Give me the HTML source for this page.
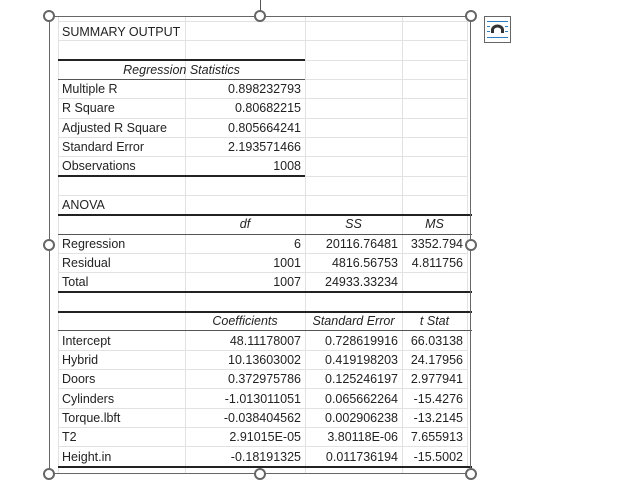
<!DOCTYPE html><html><head><style>
body{margin:0;width:624px;height:493px;background:#fff;position:relative;overflow:hidden;font-family:"Liberation Sans",sans-serif;font-size:12.5px;color:#222}
.h{position:absolute;left:58px;width:409px;height:1px;background:#e2e2e2}
.v{position:absolute;top:17px;height:457px;width:1px;background:#e2e2e2}
.tk{position:absolute;left:58px;width:414px;height:2px;background:#222}
.tn{position:absolute;left:58px;width:414px;height:1px;background:#555}
.t{position:absolute;line-height:19px;white-space:nowrap;margin-top:1px}
.l{left:62px}
.c{right:calc(624px - 301px)}
.d{right:calc(624px - 398px)}
.e{right:calc(624px - 463px)}
.cc{left:185px;width:120px;text-align:center}
.dc{left:305px;width:97px;text-align:center}
.ec{left:402px;width:65px;text-align:center}
i{font-style:italic}
.hd{position:absolute;border:2px solid #666;border-radius:50%;background:#fff;box-sizing:border-box;margin:-6px 0 0 -6px;width:12px;height:12px}
</style></head><body>
<div style="position:absolute;left:260px;top:0;width:1px;height:16px;background:#555"></div>
<div class="v" style="left:58px"></div><div class="v" style="left:185px"></div><div class="v" style="left:305px"></div><div class="v" style="left:402px"></div><div class="v" style="left:467px"></div>
<div class="h" style="top:21px"></div><div class="h" style="top:40px"></div><div class="h" style="top:60px"></div><div class="h" style="top:79px"></div><div class="h" style="top:98px"></div><div class="h" style="top:118px"></div><div class="h" style="top:137px"></div><div class="h" style="top:156px"></div><div class="h" style="top:176px"></div><div class="h" style="top:195px"></div><div class="h" style="top:214px"></div><div class="h" style="top:234px"></div><div class="h" style="top:253px"></div><div class="h" style="top:272px"></div><div class="h" style="top:292px"></div><div class="h" style="top:311px"></div><div class="h" style="top:330px"></div><div class="h" style="top:350px"></div><div class="h" style="top:369px"></div><div class="h" style="top:388px"></div><div class="h" style="top:408px"></div><div class="h" style="top:427px"></div><div class="h" style="top:446px"></div>
<div class="tk" style="top:59px;width:247px"></div><div class="tn" style="top:79px;width:247px"></div><div class="tk" style="top:175px;width:247px"></div>
<div class="tk" style="top:214px"></div><div class="tn" style="top:234px"></div><div class="tk" style="top:291px"></div>
<div class="tk" style="top:311px"></div><div class="tn" style="top:330px"></div><div class="tk" style="top:466px"></div>
<div style="position:absolute;left:49px;top:16px;width:422px;height:458px;border:1px solid #666;box-sizing:border-box"></div>
<div class="t l" style="top:22px">SUMMARY OUTPUT</div>
<div class="t" style="top:60px;left:58px;width:247px;text-align:center"><i>Regression Statistics</i></div>
<div class="t l" style="top:79px">Multiple R</div><div class="t c" style="top:79px">0.898232793</div>
<div class="t l" style="top:98px">R Square</div><div class="t c" style="top:98px">0.80682215</div>
<div class="t l" style="top:118px">Adjusted R Square</div><div class="t c" style="top:118px">0.805664241</div>
<div class="t l" style="top:137px">Standard Error</div><div class="t c" style="top:137px">2.193571466</div>
<div class="t l" style="top:156px">Observations</div><div class="t c" style="top:156px">1008</div>
<div class="t l" style="top:195px">ANOVA</div>
<div class="t cc" style="top:214px"><i>df</i></div><div class="t dc" style="top:214px"><i>SS</i></div><div class="t ec" style="top:214px"><i>MS</i></div>
<div class="t l" style="top:234px">Regression</div><div class="t c" style="top:234px">6</div><div class="t d" style="top:234px">20116.76481</div><div class="t e" style="top:234px">3352.794</div>
<div class="t l" style="top:253px">Residual</div><div class="t c" style="top:253px">1001</div><div class="t d" style="top:253px">4816.56753</div><div class="t e" style="top:253px">4.811756</div>
<div class="t l" style="top:272px">Total</div><div class="t c" style="top:272px">1007</div><div class="t d" style="top:272px">24933.33234</div>
<div class="t cc" style="top:311px"><i>Coefficients</i></div><div class="t dc" style="top:311px"><i>Standard Error</i></div><div class="t ec" style="top:311px"><i>t Stat</i></div>
<div class="t l" style="top:331px">Intercept</div><div class="t c" style="top:331px">48.11178007</div><div class="t d" style="top:331px">0.728619916</div><div class="t e" style="top:331px">66.03138</div>
<div class="t l" style="top:350px">Hybrid</div><div class="t c" style="top:350px">10.13603002</div><div class="t d" style="top:350px">0.419198203</div><div class="t e" style="top:350px">24.17956</div>
<div class="t l" style="top:369px">Doors</div><div class="t c" style="top:369px">0.372975786</div><div class="t d" style="top:369px">0.125246197</div><div class="t e" style="top:369px">2.977941</div>
<div class="t l" style="top:389px">Cylinders</div><div class="t c" style="top:389px">-1.013011051</div><div class="t d" style="top:389px">0.065662264</div><div class="t e" style="top:389px">-15.4276</div>
<div class="t l" style="top:408px">Torque.lbft</div><div class="t c" style="top:408px">-0.038404562</div><div class="t d" style="top:408px">0.002906238</div><div class="t e" style="top:408px">-13.2145</div>
<div class="t l" style="top:427px">T2</div><div class="t c" style="top:427px">2.91015E-05</div><div class="t d" style="top:427px">3.80118E-06</div><div class="t e" style="top:427px">7.655913</div>
<div class="t l" style="top:447px">Height.in</div><div class="t c" style="top:447px">-0.18191325</div><div class="t d" style="top:447px">0.011736194</div><div class="t e" style="top:447px">-15.5002</div>
<div class="hd" style="left:49px;top:16px"></div><div class="hd" style="left:260px;top:16px"></div><div class="hd" style="left:471px;top:16px"></div>
<div class="hd" style="left:49px;top:245px"></div><div class="hd" style="left:471px;top:245px"></div>
<div class="hd" style="left:49px;top:474px"></div><div class="hd" style="left:260px;top:474px"></div><div class="hd" style="left:471px;top:474px"></div>
<svg style="position:absolute;left:484px;top:16px" width="28" height="28" viewBox="0 0 28 28">
<rect x="0.5" y="0.5" width="26" height="26" fill="#fff" stroke="#666"/>
<g stroke="#2e7dbf" stroke-width="1"><line x1="3" y1="5.5" x2="24" y2="5.5"/><line x1="3" y1="21.5" x2="24" y2="21.5"/><line x1="3" y1="10.5" x2="6" y2="10.5"/><line x1="21" y1="10.5" x2="24" y2="10.5"/><line x1="3" y1="15.5" x2="6" y2="15.5"/><line x1="21" y1="15.5" x2="24" y2="15.5"/></g>
<path d="M8.5 17 V14 a5 4 0 0 1 10 0 V17" fill="none" stroke="#333" stroke-width="3"/>
</svg>
</body></html>
